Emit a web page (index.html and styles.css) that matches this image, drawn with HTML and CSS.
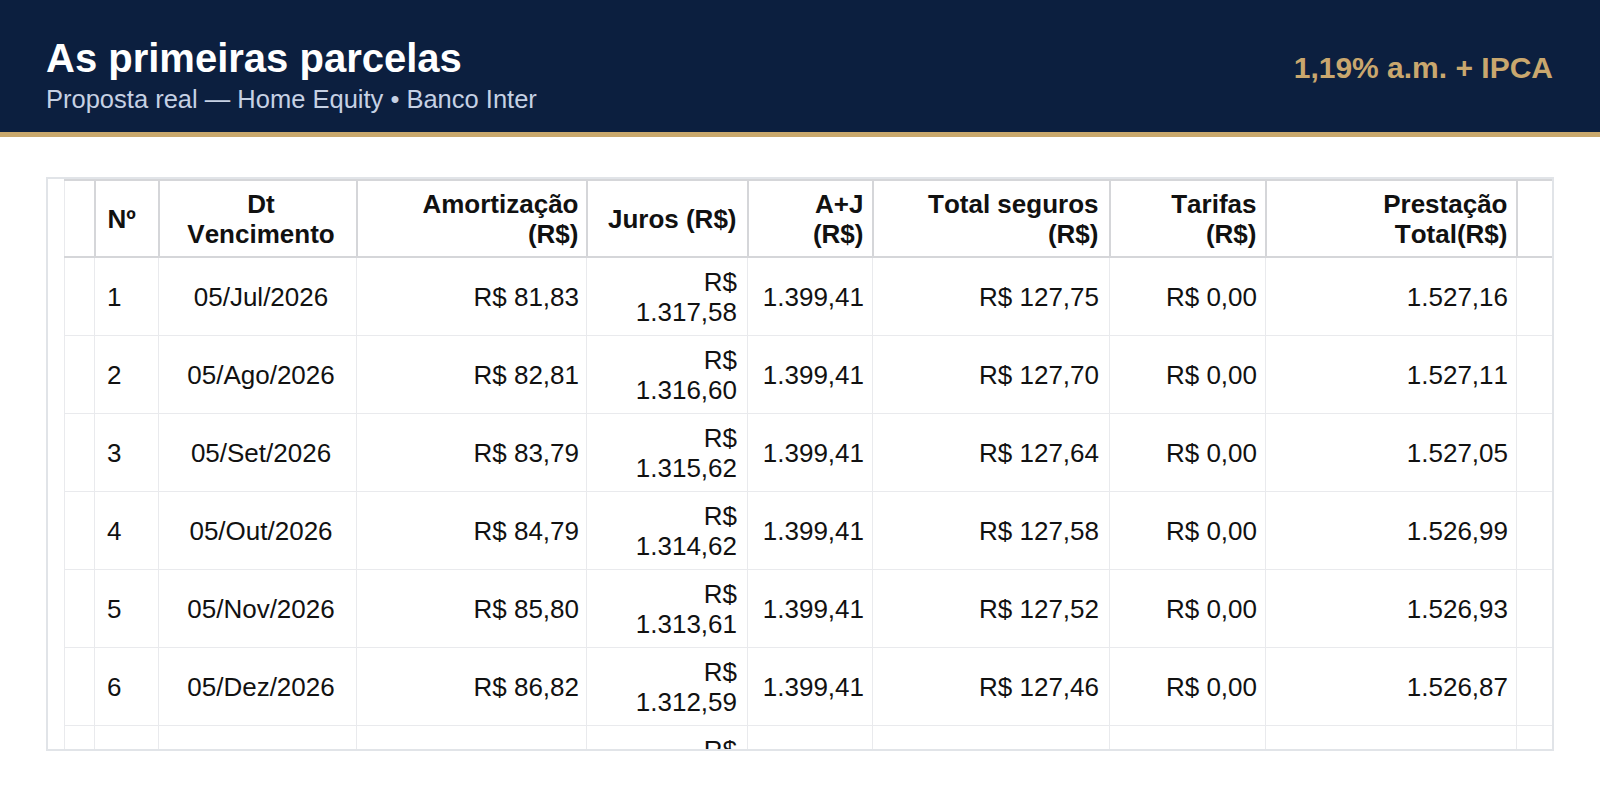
FILE: index.html
```html
<!DOCTYPE html>
<html lang="pt-BR">
<head>
<meta charset="utf-8">
<title>As primeiras parcelas</title>
<link rel="stylesheet" href="styles.css">
</head>
<body>
<header class="topbar">
  <div class="titles">
    <h1 class="title">As primeiras parcelas</h1>
    <p class="subtitle">Proposta real — Home Equity • Banco Inter</p>
  </div>
  <div class="rate">1,19% a.m. + IPCA</div>
</header>
<main class="content">
  <div class="frame">
    <table class="sched">
      <colgroup>
        <col class="c-pad"><col class="c-n"><col class="c-dt"><col class="c-am"><col class="c-ju"><col class="c-aj"><col class="c-se"><col class="c-ta"><col class="c-pr"><col class="c-end">
      </colgroup>
      <thead>
        <tr>
          <th class="pad"></th>
          <th class="l">Nº</th>
          <th class="c dt">Dt<br>Vencimento</th>
          <th class="r am">Amortização<br>(R$)</th>
          <th class="r">Juros (R$)</th>
          <th class="r aj">A+J<br>(R$)</th>
          <th class="r">Total seguros<br>(R$)</th>
          <th class="r aj">Tarifas<br>(R$)</th>
          <th class="r aj">Prestação<br>Total(R$)</th>
          <th></th>
        </tr>
      </thead>
      <tbody>
        <tr><td class="pad"></td><td class="l">1</td><td class="c dt">05/Jul/2026</td><td class="r am">R$ 81,83</td><td class="r">R$<br>1.317,58</td><td class="r aj">1.399,41</td><td class="r">R$ 127,75</td><td class="r aj">R$ 0,00</td><td class="r aj">1.527,16</td><td></td></tr>
        <tr><td class="pad"></td><td class="l">2</td><td class="c dt">05/Ago/2026</td><td class="r am">R$ 82,81</td><td class="r">R$<br>1.316,60</td><td class="r aj">1.399,41</td><td class="r">R$ 127,70</td><td class="r aj">R$ 0,00</td><td class="r aj">1.527,11</td><td></td></tr>
        <tr><td class="pad"></td><td class="l">3</td><td class="c dt">05/Set/2026</td><td class="r am">R$ 83,79</td><td class="r">R$<br>1.315,62</td><td class="r aj">1.399,41</td><td class="r">R$ 127,64</td><td class="r aj">R$ 0,00</td><td class="r aj">1.527,05</td><td></td></tr>
        <tr><td class="pad"></td><td class="l">4</td><td class="c dt">05/Out/2026</td><td class="r am">R$ 84,79</td><td class="r">R$<br>1.314,62</td><td class="r aj">1.399,41</td><td class="r">R$ 127,58</td><td class="r aj">R$ 0,00</td><td class="r aj">1.526,99</td><td></td></tr>
        <tr><td class="pad"></td><td class="l">5</td><td class="c dt">05/Nov/2026</td><td class="r am">R$ 85,80</td><td class="r">R$<br>1.313,61</td><td class="r aj">1.399,41</td><td class="r">R$ 127,52</td><td class="r aj">R$ 0,00</td><td class="r aj">1.526,93</td><td></td></tr>
        <tr><td class="pad"></td><td class="l">6</td><td class="c dt">05/Dez/2026</td><td class="r am">R$ 86,82</td><td class="r">R$<br>1.312,59</td><td class="r aj">1.399,41</td><td class="r">R$ 127,46</td><td class="r aj">R$ 0,00</td><td class="r aj">1.526,87</td><td></td></tr>
        <tr><td class="pad"></td><td class="l">7</td><td class="c dt">05/Jan/2027</td><td class="r am">R$ 87,85</td><td class="r">R$<br>1.311,56</td><td class="r aj">1.399,41</td><td class="r">R$ 127,40</td><td class="r aj">R$ 0,00</td><td class="r aj">1.526,81</td><td></td></tr>
      </tbody>
    </table>
  </div>
</main>
</body>
</html>
```

FILE: styles.css
```css
html, body {
  margin: 0;
  padding: 0;
  background: #ffffff;
  font-family: "Liberation Sans", Arial, sans-serif;
}

.topbar {
  background: #0c1f3f;
  border-bottom: 5px solid #c9a86c;
  display: flex;
  justify-content: space-between;
  align-items: flex-start;
  padding: 35px 47px 0 46px;
  height: 97px;
}

.title {
  margin: 0 0 3px 0;
  font-size: 40px;
  line-height: 46px;
  font-weight: 700;
  color: #ffffff;
}

.subtitle {
  margin: 0;
  font-size: 25.5px;
  line-height: 30px;
  color: #c6d1e4;
}

.rate {
  margin-top: 15px;
  font-size: 30px;
  line-height: 36px;
  font-weight: 700;
  color: #c9a76e;
}

.content {
  padding: 40px 46px 0 46px;
}

.frame {
  box-sizing: border-box;
  width: 1508px;
  height: 574px;
  border: 2px solid #e1e4e8;
  padding: 0 0 0 16px;
  overflow: hidden;
}

.sched {
  table-layout: fixed;
  border-collapse: collapse;
  width: 1490px;
  font-size: 26px;
  line-height: 30px;
  color: #111111;
  font-kerning: none;
}

.c-pad { width: 30px; }
.c-n { width: 64px; }
.c-dt { width: 198px; }
.c-am { width: 230px; }
.c-ju { width: 161px; }
.c-aj { width: 125px; }
.c-se { width: 237px; }
.c-ta { width: 156px; }
.c-pr { width: 251px; }
.c-end { width: 38px; }

.sched th {
  font-weight: 700;
  padding: 7.5px 10px 7.5px 10px;
  border: 2px solid #d5d6d9;
  vertical-align: middle;
  white-space: nowrap;
}

.sched td {
  padding: 8.5px 10px;
  border: 1px solid #e9eaed;
  vertical-align: middle;
  white-space: nowrap;
}

.sched th.pad {
  border-left: 1px solid #e9eaed;
}

.l { text-align: left; }
.c { text-align: center; }
.r { text-align: right; }

.sched .l {
  padding-left: 12px;
}

.sched .dt {
  padding-left: 17px;
}

.sched .am {
  padding-right: 7px;
}

.sched .aj {
  padding-right: 8px;
}
```
